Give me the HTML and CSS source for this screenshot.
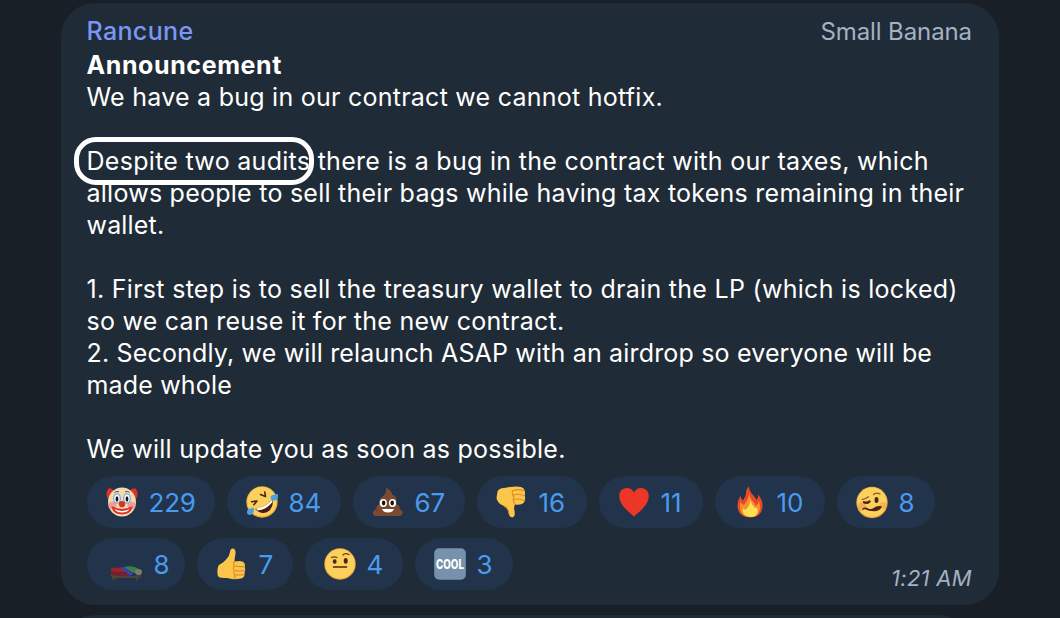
FILE: index.html
```html
<!DOCTYPE html>
<html lang="en">
<head>
  <meta charset="UTF-8" />
  <meta name="viewport" content="width=device-width, initial-scale=1.0"/>
  <title>Rancune</title>
  <link rel="stylesheet" href="styles.css">
</head>
<body>
  <div class="message">
    <div class="header">
      <span class="author">Rancune</span>
      <span class="role">Small Banana</span>
    </div>

    <div class="text">
      <div class="title">Announcement</div>
      <div class="line">We have a bug in our contract we cannot hotfix.</div>
      <br>
      <div class="line wide"><span class="marked">Despite two audits</span> there is a bug in the contract with our taxes, which</div>
      <div class="line">allows people to sell their bags while having tax tokens remaining in their</div>
      <div class="line tight">wallet.</div>
      <br>
      <div class="line wide">1. First step is to sell the treasury wallet to drain the LP (which is locked)</div>
      <div class="line">so we can reuse it for the new contract.</div>
      <div class="line tight">2. Secondly, we will relaunch ASAP with an airdrop so everyone will be</div>
      <div class="line tight">made whole</div>
      <br>
      <div class="line">We will update you as soon as possible.</div>
    </div>

    <div class="reactions">
      <div class="reaction clown">
        <svg viewBox="0 0 32 32">
          <path d="M6 3 Q2 1 1 5 Q-1 10 3 14 L8 13 L9 5 Z M26 3 Q30 1 31 5 Q33 10 29 14 L24 13 L23 5 Z" fill="#d8342c"/>
          <ellipse cx="16" cy="16" rx="14" ry="14.6" fill="#f0dcb4"/>
          <circle cx="6.5" cy="19.5" r="4" fill="#f0a08c"/>
          <circle cx="25.5" cy="19.5" r="4" fill="#f0a08c"/>
          <path d="M8.5 6.5 Q11 4.5 13 6 M19 6 Q21.5 4.5 23.5 6.5" fill="none" stroke="#6b4a35" stroke-width="1"/>
          <ellipse cx="11" cy="12.5" rx="3.9" ry="5.3" fill="#6fa9d6"/>
          <ellipse cx="21" cy="12.5" rx="3.9" ry="5.3" fill="#6fa9d6"/>
          <ellipse cx="11" cy="12.6" rx="2.7" ry="4" fill="#fff"/>
          <ellipse cx="21" cy="12.6" rx="2.7" ry="4" fill="#fff"/>
          <ellipse cx="11" cy="13" rx="1.4" ry="2.7" fill="#1d1512"/>
          <ellipse cx="21" cy="13" rx="1.4" ry="2.7" fill="#1d1512"/>
          <path d="M5.5 20 Q6.5 28.5 16 28.5 Q25.5 28.5 26.5 20 Q16 26 5.5 20 Z" fill="#dc3329"/>
          <path d="M8.5 23 Q16 27 23.5 23 Q21.5 26.5 16 26.5 Q10.5 26.5 8.5 23 Z" fill="#fff"/>
          <circle cx="16" cy="18.2" r="3.1" fill="#dd2f22"/>
        </svg>
        <span class="count">229</span>
      </div>
      <div class="reaction rofl">
        <svg viewBox="0 0 32 32">
          <circle cx="16" cy="16" r="15.7" fill="#efaa3b"/>
          <circle cx="16" cy="15.7" r="14.7" fill="#fbd05c"/>
          <path d="M5.5 15.7 L11 15 L7.8 18.7 M14.5 8.5 L19.5 10.5 L18.8 6" fill="none" stroke="#4b2412" stroke-width="1.6" stroke-linecap="round" stroke-linejoin="round"/>
          <path d="M9 23 Q20 21.5 26.8 12.5 Q28 20 23 25 Q16 30 9 23 Z" fill="#4b1c12"/>
          <path d="M10 22.8 Q20 21 26.3 13.5 L26.5 16 Q20 24 11.5 24.5 Z" fill="#fff"/>
          <path d="M24.5 12.2 Q24.5 8.5 29 8.5 L32 8 Q32.5 14 29 14.5 Q26 15 24.5 12.2 Z" fill="#4aa3dc"/>
          <path d="M7.5 21.5 Q8.5 25 7 27.5 Q4 30 1.5 28 Q0 25 2.5 23 Z" fill="#4aa3dc"/>
        </svg>
        <span class="count">84</span>
      </div>
      <div class="reaction poop">
        <svg viewBox="0 0 32 32">
          <path d="M14 2 Q19.5 3.5 20 8.5 Q24.5 10 24.5 14.5 L24 18 Q28.5 19.5 27.5 23 Q31.5 25 30.5 28 Q29.5 30.5 25 30 H6 Q1.5 30.5 1 27.5 Q1 24 4.5 23 Q4 19 8 18 Q6 13.5 10.5 10.5 Q14.5 8 14 2 Z" fill="#7d4a31"/>
          <path d="M10 15 Q17 16.5 22.5 11.5 M7 23.5 Q5 25 4 25.5" fill="none" stroke="#643821" stroke-width="1"/>
          <ellipse cx="11.3" cy="17" rx="3.6" ry="4" fill="#fff"/>
          <ellipse cx="20.5" cy="17" rx="3.6" ry="4" fill="#fff"/>
          <ellipse cx="11.6" cy="17" rx="1.8" ry="2.4" fill="#1d1512"/>
          <ellipse cx="20.2" cy="17" rx="1.8" ry="2.4" fill="#1d1512"/>
          <path d="M10 23 H22 Q20.5 26.5 16 26.5 Q11.5 26.5 10 23 Z" fill="#fff"/>
        </svg>
        <span class="count">67</span>
      </div>
      <div class="reaction down">
        <svg viewBox="0 0 32 32">
          <path d="M1.5 5.5 Q3 2 8 2 L14 1 Q25 -0.5 27.5 2.5 Q29.5 5 28.8 9 Q30 14 27.5 17 Q25 19.5 19 18.5 Q17.5 21 18.5 25 Q19.5 30.5 16.5 31.3 Q13.5 31.5 13 28 Q12.5 22 8 20 Q1 17 0.5 12 Z" fill="#fcc64b"/>
          <path d="M17 4.5 Q23 2.5 28 5 M17 9 Q23 7 29 10 M18 13.5 Q23 12 28.5 14.5 M17 4 Q15 8 18 11 Q16 14 19 18.5 M8 20 Q12.5 22 13 28" fill="none" stroke="#dc8b2c" stroke-width="1.1"/>
        </svg>
        <span class="count">16</span>
      </div>
      <div class="reaction heart">
        <svg viewBox="0 0 32 32">
          <path d="M16 30.8 C13 27 1.3 20.5 1.3 10 C1.3 1 12.5 -0.5 16 6.5 C19.5 -0.5 30.7 1 30.7 10 C30.7 20.5 19 27 16 30.8 Z" fill="#ec3728"/>
        </svg>
        <span class="count">11</span>
      </div>
      <div class="reaction fire">
        <svg viewBox="0 0 32 32">
          <path d="M15 0.5 Q15 5 19 9 Q22 12 22.5 14 Q24.5 12 24 8.5 Q29 14 28.5 21 Q27.5 31.5 16 31.5 Q4.5 31 3.5 21 Q3 15.5 6.5 9.5 Q7 13 9 14.5 Q12 10 12 7 Q12 3 15 0.5 Z" fill="#e84a27"/>
          <path d="M15.5 6 Q15 12 19 15.5 Q21.5 18.5 21.5 20 Q24.5 18 25 15 Q28.5 27 20 30.5 H12 Q4 27 6.5 16 Q8 19 10 19 Q15 13 15.5 6 Z" fill="#f98f35"/>
          <path d="M16.5 13.5 Q17 18 20 21 Q22 22.5 22.5 21.5 Q26.5 30 17 31 Q7.5 31 9 22 Q10 24 12 23.5 Q16.5 19 16.5 13.5 Z" fill="#fee052"/>
        </svg>
        <span class="count">10</span>
      </div>
      <div class="reaction woozy">
        <svg viewBox="0 0 32 32">
          <circle cx="16" cy="16.5" r="15.7" fill="#efaa3b"/>
          <circle cx="16" cy="16.1" r="14.7" fill="#fbd05c"/>
          <circle cx="6" cy="20.5" r="4.3" fill="#f0a052" opacity=".7"/>
          <circle cx="27" cy="19.5" r="3.5" fill="#f0a052" opacity=".6"/>
          <path d="M6 13.5 Q10 13 12.5 10.8 M17.5 8.5 Q20 6 24 8" fill="none" stroke="#8a5420" stroke-width="1.2" stroke-linecap="round"/>
          <path d="M8 16.3 Q11 17.5 13.5 15.5" fill="none" stroke="#4b2412" stroke-width="2.3" stroke-linecap="round"/>
          <ellipse cx="20.5" cy="14" rx="2" ry="2.9" fill="#4b2412"/>
          <path d="M7 23 Q9 21.5 12 23 Q15.5 24.5 18 22.5 Q21 20 25 20.8 Q23.5 24.5 18 24.5 Q13 24.5 10 23" fill="#4b2412" stroke="#4b2412" stroke-width="1.3" stroke-linecap="round"/>
        </svg>
        <span class="count">8</span>
      </div>
      <div class="reaction bed">
        <svg viewBox="0 0 37 32">
          <path d="M6.5 26 V32 M9 28 V33 M34 26 V31 M31 27 V33" stroke="#5a4535" stroke-width="1"/>
          <path d="M5 27 L8 29 H31 L35 26" fill="none" stroke="#5f4733" stroke-width="1.5"/>
          <path d="M5 20 L16 19.5 L25 27.5 H8 L5 26 Z" fill="#9c2229"/>
          <path d="M5 23.5 L20 24 L24 27.5 H8 L5 26 Z" fill="#74202b"/>
          <path d="M18 19 Q27 17 33 21 L34 24 L27 25 Z" fill="#3c7d48"/>
          <path d="M14.5 19.5 L18.5 19 L27.5 26.5 L24 27.5 Z" fill="#2849c4"/>
          <ellipse cx="32.5" cy="24" rx="3.5" ry="3" fill="#7b7b6e"/>
        </svg>
        <span class="count">8</span>
      </div>
      <div class="reaction up">
        <svg viewBox="0 0 32 32">
          <path d="M17 0.5 Q20 1 19.5 6 Q18.5 10 18.5 13.5 Q26 12 28 14.5 Q29.5 16.5 28.8 19.5 Q30 22 28.5 25 Q29 29.5 25 30.5 Q17 32 11 30 Q8 30 4 29.5 Q1.5 29 1.5 25.5 Q1 19.5 3 17 Q8 14.5 10.5 11 Q13.5 8 14 4 Q14 0.5 17 0.5 Z" fill="#fcc64b"/>
          <path d="M18.5 13.5 Q16.5 15.5 18.5 18 Q16 20 18.5 22.5 Q16.5 25 19 26.5 Q17.5 29 20 30.5 M18.5 18 Q23 19 28.8 18.5 M18.5 22.5 Q23 23.5 28.8 22.5 M19 26.5 Q23 27.5 28.3 26.5" fill="none" stroke="#dc8b2c" stroke-width="1.1"/>
        </svg>
        <span class="count">7</span>
      </div>
      <div class="reaction brow">
        <svg viewBox="0 0 32 32">
          <circle cx="16" cy="16" r="15.7" fill="#efaa3b"/>
          <circle cx="16" cy="15.7" r="14.7" fill="#fbd05c"/>
          <path d="M7.5 9.5 Q10 8.2 13 9.5 M19 7 Q21 4.5 25 6.5" fill="none" stroke="#6e3c18" stroke-width="1.3" stroke-linecap="round"/>
          <ellipse cx="10.7" cy="13.5" rx="1.9" ry="2.3" fill="#4b2412"/>
          <ellipse cx="21.7" cy="12.8" rx="2" ry="2.9" fill="#4b2412"/>
          <path d="M9.5 19 H22.5" stroke="#4b2412" stroke-width="1.6" stroke-linecap="round"/>
        </svg>
        <span class="count">4</span>
      </div>
      <div class="reaction cool">
        <svg viewBox="0 0 32 32">
          <rect x="0.2" y="0.2" width="31.6" height="31.6" rx="5" fill="#7793ab"/>
          <text x="16" y="20.8" text-anchor="middle" textLength="28" lengthAdjust="spacingAndGlyphs">COOL</text>
        </svg>
        <span class="count">3</span>
      </div>
    </div>

    <div class="time">1:21 AM</div>
  </div>
  <div class="message next"></div>
</body>
</html>
```

FILE: styles.css
```css
* {
  box-sizing: border-box;
}
body {
  margin: 0;
  padding: 3px 61px 0;
  height: 618px;
  overflow: hidden;
  background: #191f26;
  font-family: Inter, sans-serif;
  font-size: 25px;
  line-height: 32px;
  color: #fff;
}
.message {
  position: relative;
  width: 938px;
  height: 602px;
  padding: 12px 27px 0 25.5px;
  border-radius: 34px;
  background: #1f2b36;
}
.next {
  width: 912px;
  height: 80px;
  margin-top: 10px;
}
.header {
  display: flex;
  justify-content: space-between;
  height: 34px;
}
.author {
  color: #7b96f5;
  font-weight: 500;
  letter-spacing: 0.35px;
}
.role {
  padding-top: 1px;
  color: #a3b2c4;
  font-size: 24px;
  letter-spacing: -0.1px;
}
.title {
  font-weight: 700;
  letter-spacing: 0.6px;
}
.line {
  white-space: nowrap;
  letter-spacing: 0.25px;
}
.wide {
  letter-spacing: 0.29px;
}
.tight {
  letter-spacing: 0.17px;
}
.marked {
  position: relative;
}
/* ring around the first words */
.marked::after {
  content: "";
  position: absolute;
  box-sizing: border-box;
  left: -12.5px;
  top: -9px;
  width: 240px;
  height: 48px;
  border: 5px solid #fff;
  border-radius: 22px;
}
.reactions {
  display: flex;
  flex-wrap: wrap;
  gap: 10px 12px;
  margin-top: 11px;
}
.reaction {
  display: flex;
  align-items: center;
  gap: 11px;
  height: 52px;
  padding-left: 19px;
  border-radius: 26px;
  background: #22344b;
}
.reaction svg {
  width: 32px;
  height: 32px;
  flex: none;
  overflow: visible;
}
.reaction text {
  fill: #fff;
  font-size: 13px;
  font-weight: 800;
}
.count {
  padding-top: 2px;
  color: #4a9bee;
  font-size: 26px;
  letter-spacing: -0.2px;
}
.clown { width: 128px; }
.rofl { width: 114px; }
.poop { width: 112px; }
.down { width: 110px; }
.heart { width: 104px; }
.fire { width: 110px; }
.woozy { width: 98px; }
.bed { width: 98px; }
.bed svg { width: 37px; }
.up { width: 96px; }
.brow { width: 98px; }
.cool { width: 98px; }
.time {
  position: absolute;
  right: 27px;
  bottom: 11px;
  color: #a3b2c4;
  font-size: 22px;
  font-style: italic;
  letter-spacing: 0.3px;
}
```
